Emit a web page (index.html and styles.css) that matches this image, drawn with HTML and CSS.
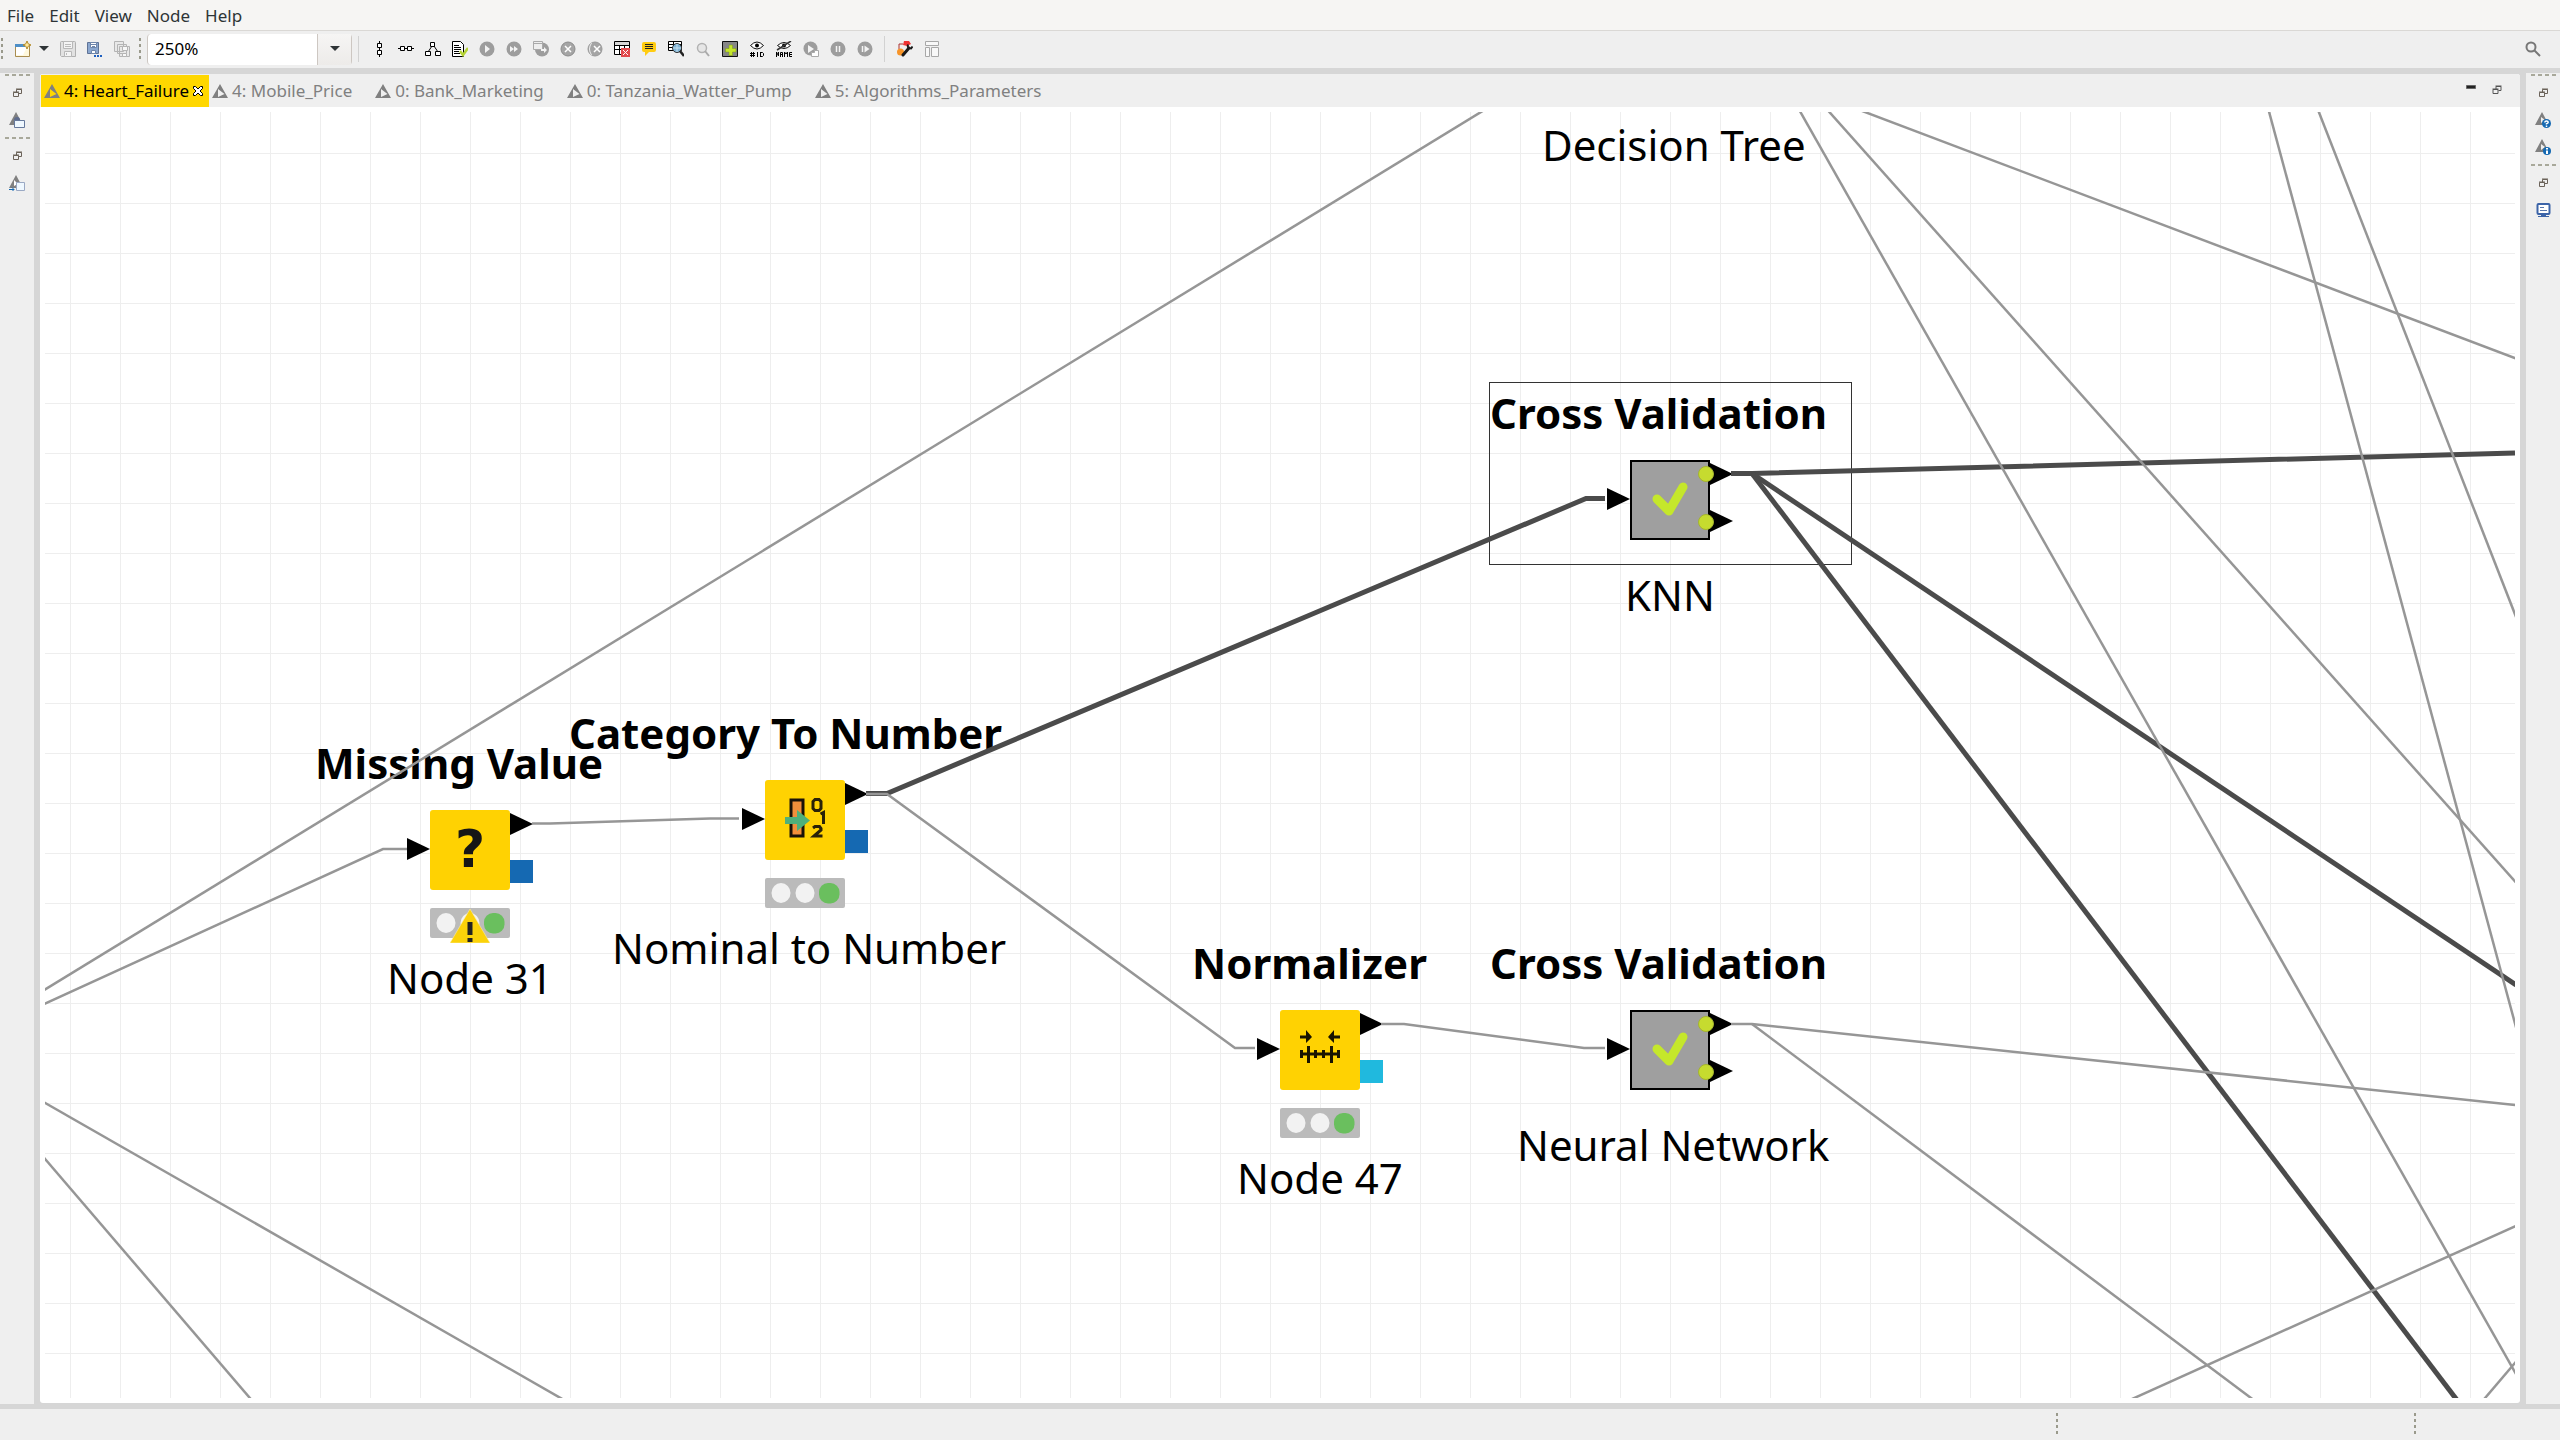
FILE: index.html
```html
<!DOCTYPE html>
<html lang="en">
<head>
<meta charset="utf-8">
<title>Workflow editor</title>
<link rel="stylesheet" href="styles.css">
</head>
<body>
<svg class="defs" aria-hidden="true">
  <symbol id="flow" viewBox="0 0 16 16"><path fill="#808080" fill-rule="evenodd" d="M8 1l8 14H0zM6 6v8l6.500-3z"/></symbol>
  <symbol id="restore" viewBox="0 0 9 9"><path fill="none" stroke="currentColor" d="M3.500 5V1.500h5v4H6M3 1h6M.5 4.500h5v4h-5zM0 4h6"/></symbol>
  <symbol id="disk" viewBox="0 0 16 16"><path fill="#e2e2e2" stroke="#b0b0b0" d="M.5 1.500q0-1 1-1h13q1 0 1 1v14h-14l-1-1z"/><path fill="#f4f4f4" stroke="#b8b8b8" d="M3.500.5h9v7h-9zM4.500 10.500h7v5h-7z"/><path stroke="#bbb" d="M5 3.500h6M5 5.500h6M6.500 12v2"/></symbol>
  <symbol id="port" viewBox="0 0 22 22" preserveAspectRatio="none"><path d="M0 0l22 11L0 22z"/></symbol>
  <symbol id="lights" viewBox="0 0 80 30"><rect width="80" height="30" rx="2" fill="#bbb"/><ellipse cx="16" cy="15" rx="9.500" ry="10" fill="#f2f2f2"/><ellipse cx="40" cy="15" rx="9.500" ry="10" fill="#f2f2f2"/><rect x="54" y="5" width="20.500" height="20.500" rx="9" fill="#6abf5e"/></symbol>
  <symbol id="cross-validation" viewBox="0 0 80 80"><rect x="1" y="1" width="78" height="78" fill="#9f9f9f" stroke="#000" stroke-width="2"/><path fill="none" stroke="#c5e72b" stroke-width="9" stroke-linecap="round" stroke-linejoin="round" d="M27 39l12 12 14-24"/></symbol>
</svg>

<nav class="menubar" aria-label="Main menu">
  <button>File</button><button>Edit</button><button>View</button><button>Node</button><button>Help</button>
</nav>

<div class="toolbar" role="toolbar" aria-label="Tools">
  <span class="grip"></span>
  <button class="tool" aria-label="New"><svg viewBox="0 0 16 16"><path fill="#fff8dc" stroke="#a98d50" d="M.5 3.500h14v12H.5z"/><path fill="#4e8fc7" d="M0 3h10v3H0z"/><path fill="#fff" d="M1 6h11l-4 8H1z"/><path fill="#ffe9a0" stroke="#b38a28" d="M12 0l1.200 2.800L16 4l-2.800 1.200L12 8l-1.200-2.800L8 4l2.800-1.200z"/></svg></button>
  <button class="tool drop" aria-label="New menu"><svg viewBox="0 0 10 6"><path fill="#2e3436" d="M0 0h10L5 5z"/></svg></button>
  <button class="tool" aria-label="Save"><svg><use href="#disk"/></svg></button>
  <button class="tool" aria-label="Save as"><svg viewBox="0 0 16 16"><path fill="#8ba7cf" stroke="#5f7396" d="M.5 1.500h11v11H.5z"/><path fill="#fff" stroke="#6f86ab" d="M3.500 1.500h6v5h-6zM4.500 9.500h4v3h-4z"/><path stroke="#6f86ab" d="M4 3.500h5M5 5.500h3"/><path fill="#1d5fc0" d="M7 14h2v2H7zM10 14h2v2h-2zM13 14h2v2h-2z"/></svg></button>
  <button class="tool" aria-label="Save all"><svg viewBox="0 0 16 16"><path fill="#e8e8e8" stroke="#b4b4b4" d="M.5.500h9v10h-9zM3.500 3.500h9v9h-9zM5.500 5.500h10v10h-10z"/><path fill="#f8f8f8" stroke="#b4b4b4" d="M8.500 5.500h5v4h-5zM8.500 12.500h4v3h-4z"/></svg></button>
  <span class="grip"></span>
  <div class="combo">
    <input type="text" value="250%" aria-label="Zoom level">
    <button aria-label="Zoom levels"><svg viewBox="0 0 10 6"><path fill="#2e3436" d="M0 0h10L5 5z"/></svg></button>
  </div>
  <span class="rule"></span>
  <button class="tool" aria-label="Align vertically"><svg viewBox="0 0 16 16"><path fill="#fff" stroke="#000" d="M8.500 0v2.500M8.500 6.500v3M8.500 13.500V16M6.500 2.500h4v4h-4zM6.500 9.500h4v4h-4z"/></svg></button>
  <button class="tool" aria-label="Align horizontally"><svg viewBox="0 0 16 16"><path fill="#fff" stroke="#000" d="M0 7.500h2.500M6.500 7.500h3M13.500 7.500H16M2.500 5.500h4v4h-4zM9.500 5.500h4v4h-4z"/></svg></button>
  <button class="tool" aria-label="Auto layout"><svg viewBox="0 0 16 16"><path fill="#fff" stroke="#000" d="M7 5L3 11M9 5l4 6M5.500 1.500h4v4h-4zM.5 10.500h5v4h-5zM10.500 10.500h5v4h-5z"/></svg></button>
  <button class="tool" aria-label="Configure"><svg viewBox="0 0 16 16"><path fill="#fff" stroke="#000" d="M.5.500h8l3 3v12H.5z"/><path stroke="#000" d="M2 4.500h5M2 6.500h7M2 8.500h7M2 10.500h5M2 12.500h6"/><path fill="none" stroke="#b5d334" stroke-width="2.500" d="M8 10l3 4 5-7"/></svg></button>
  <button class="tool" aria-label="Execute"><svg viewBox="0 0 16 16"><circle cx="8" cy="8" r="7.500" fill="#9d9d9d"/><path fill="#f3f3f3" d="M6 4v8l5-4z"/></svg></button>
  <button class="tool" aria-label="Execute all"><svg viewBox="0 0 16 16"><circle cx="8" cy="8" r="7.500" fill="#9d9d9d"/><path fill="#f3f3f3" d="M4 5v6l4-3zM8 5v6l4-3z"/></svg></button>
  <button class="tool" aria-label="Execute and open view"><svg viewBox="0 0 16 16"><circle cx="9" cy="8.500" r="7" fill="#9d9d9d"/><path fill="#eee" stroke="#aaa" d="M.5.500h9v8h-9z"/><path stroke="#aaa" d="M0 2.500h9"/><path fill="#f3f3f3" d="M8 8h3V6l3 3-3 3v-2H8z"/></svg></button>
  <button class="tool" aria-label="Cancel"><svg viewBox="0 0 16 16"><circle cx="8" cy="8" r="7" fill="#a5a5a5" stroke="#8c8c8c"/><path stroke="#fff" stroke-width="1.500" d="M5 5l6 6M11 5l-6 6"/></svg></button>
  <button class="tool" aria-label="Cancel all"><svg viewBox="0 0 16 16"><circle cx="8" cy="8" r="7" fill="#a5a5a5" stroke="#999"/><path fill="none" stroke="#eee" d="M4.500 2q-4 6 0 12"/><path stroke="#fff" stroke-width="1.500" d="M7 5l6 6M13 5l-6 6"/></svg></button>
  <button class="tool" aria-label="Reset"><svg viewBox="0 0 16 16"><path fill="#fff" stroke="#000" d="M.5.500h15v13H.5zM0 4.500h16M0 8.500h16M5.500 4v10M10.500 4v10"/><path fill="#d8d8d8" d="M1 1h14v3H1z"/><path fill="#e24a4d" d="M7 7h9v9H7z"/><path stroke="#fff" d="M9 9l5 5M14 9l-5 5"/></svg></button>
  <button class="tool" aria-label="Annotation"><svg viewBox="0 0 16 16"><path fill="#fc1" d="M3 1h10q2 0 2 2v6q0 2-2 2H8l-4 4v-4H3q-2 0-2-2V3q0-2 2-2z"/><path stroke="#222" d="M4 3.500h8M4 5.500h8M4 7.500h8"/></svg></button>
  <button class="tool" aria-label="Inspect table"><svg viewBox="0 0 16 16"><path fill="#fff" stroke="#000" d="M.5.500h13v9H.5zM0 3.500h14M0 6.500h12M5.500 1v9"/><circle cx="9" cy="7" r="4.500" fill="#7fb3d5" stroke="#333"/><path stroke="#c8e2f0" d="M9 3v8M5 7h8"/><path stroke="#222" stroke-width="2.500" d="M12 10l4 5"/></svg></button>
  <button class="tool" aria-label="Find"><svg viewBox="0 0 16 16"><circle cx="7" cy="7" r="4.500" fill="#e6e6e6" stroke="#b2b2b2" stroke-width="1.500"/><path stroke="#aaa" stroke-width="2" d="M10 10l4 5"/></svg></button>
  <button class="tool" aria-label="Add metanode"><svg viewBox="0 0 16 16"><path fill="#868686" stroke="#111" d="M.5.500h15v15H.5z"/><path fill="#c5e72b" stroke="#7d9a12" stroke-width=".5" d="M7 4h3.500v3.500H14V11h-3.500v3.500H7V11H3.500V7.500H7z"/></svg></button>
  <button class="tool" aria-label="Show node IDs"><svg viewBox="0 0 16 16"><path fill="#fff" stroke="#111" d="M1.500 4.500q6.500-7 13 0-6.500 7-13 0z"/><circle cx="8" cy="4.500" r="2"/><path fill="none" stroke="#000" d="M1 12.500h5M1 14.500h5M2.500 11v5M4.500 11v5M8.500 11v5M11.500 11v5M11 11.500h2.500l1 1v2l-1 1H11"/></svg></button>
  <button class="tool" aria-label="Hide node names"><svg viewBox="0 0 16 16"><path fill="#fff" stroke="#111" d="M1.500 4.500q6.500-6 13 0-6.500 6-13 0z"/><circle cx="8" cy="4.500" r="2"/><path stroke="#333" stroke-width="1.500" d="M1 9L15 0"/><path fill="none" stroke="#000" d="M.5 16v-5l2 4v-4M4.500 16v-4.500h2V16M4 13.500h3M8.500 16v-5l1.500 2 1.500-2v5M16 11.500h-2.500v4H16M13 13.500h3"/></svg></button>
  <button class="tool" aria-label="Step"><svg viewBox="0 0 16 16"><circle cx="7.500" cy="7.500" r="7" fill="#9d9d9d"/><path fill="#f3f3f3" d="M5 4v8l6-4z"/><path fill="#fff" stroke="#aaa" d="M8.500 15.500v-4h3v-2h4v6z"/></svg></button>
  <button class="tool" aria-label="Pause"><svg viewBox="0 0 16 16"><circle cx="8" cy="8" r="7.500" fill="#9d9d9d"/><path stroke="#f3f3f3" stroke-width="1.500" d="M6.500 5v6M9.500 5v6"/></svg></button>
  <button class="tool" aria-label="Resume"><svg viewBox="0 0 16 16"><circle cx="8" cy="8" r="7.500" fill="#9d9d9d"/><path stroke="#f3f3f3" stroke-width="1.500" d="M5.500 5v6"/><path fill="#f3f3f3" d="M7.500 4.500v7l5-3.500z"/></svg></button>
  <span class="rule"></span>
  <button class="tool" aria-label="Tools"><svg viewBox="0 0 16 16"><path fill="#e33" d="M7 0h5l2 3-4 2-4-1z"/><path fill="none" stroke="#a33" d="M2 8V3h4"/><circle cx="3.500" cy="11" r="3.500" fill="#f79428"/><path stroke="#1a1a1a" stroke-width="3" stroke-linecap="round" d="M6 14l6-7"/><path fill="none" stroke="#1a1a1a" stroke-width="2" d="M11 3.500q-1 4 3 4l1.500-2"/></svg></button>
  <button class="tool" aria-label="Layout"><svg viewBox="0 0 16 16"><path fill="#f8f8f8" stroke="#a8a8a8" d="M1.500.500h13v4h-13zM1.500 6.500h4v9h-4zM7.500 6.500h7v9h-7z"/></svg></button>
  <button class="tool search" aria-label="Search"><svg viewBox="0 0 16 16"><circle cx="6" cy="6" r="4.500" fill="none" stroke="#777" stroke-width="2"/><path stroke="#777" stroke-width="2" d="M9 9l6 6"/></svg></button>
</div>

<main class="workbench">
  <aside class="trim">
    <span class="dashes"></span>
    <button aria-label="Restore"><svg class="small"><use href="#restore"/></svg></button>
    <button aria-label="Explorer"><svg viewBox="0 0 16 16"><path fill="#808080" d="M7 0l7 13H0z"/><circle cx="8" cy="8" r="3" fill="#5e6c8e"/><path fill="#eff8ff" stroke="#66799c" d="M5.500 8.500h10v7h-10z"/></svg></button>
    <span class="dashes"></span>
    <button aria-label="Restore"><svg class="small"><use href="#restore"/></svg></button>
    <button aria-label="Repository"><svg viewBox="0 0 16 16"><path fill="#808080" d="M7 0l7 13H0z"/><path fill="#fff" d="M5 5v6l4-2z"/><path fill="#eff8ff" stroke="#9aa9c4" d="M7.500 7.500h8v8h-8z"/><path fill="none" stroke="#1569b2" d="M0 14.500h5M3 12.500l2 2-2 2"/></svg></button>
  </aside>

  <section class="editor">
    <header class="tabs">
      <div role="tablist" class="tablist">
        <button role="tab" aria-selected="true" class="tab active"><svg><use href="#flow"/></svg><span>4: Heart_Failure</span><svg class="close" viewBox="0 0 10 10"><path fill="#fff" stroke="#000" d="M.5.500h2L5 3 7.500.500h2v2L7 5l2.500 2.500v2h-2L5 7 2.500 9.500h-2v-2L3 5 .5 2.500z"/></svg></button>
        <button role="tab" class="tab"><svg><use href="#flow"/></svg><span>4: Mobile_Price</span></button>
        <button role="tab" class="tab"><svg><use href="#flow"/></svg><span>0: Bank_Marketing</span></button>
        <button role="tab" class="tab"><svg><use href="#flow"/></svg><span>0: Tanzania_Watter_Pump</span></button>
        <button role="tab" class="tab"><svg><use href="#flow"/></svg><span>5: Algorithms_Parameters</span></button>
      </div>
      <div class="window-tools">
        <button aria-label="Minimize"><svg viewBox="0 0 10 9"><path fill="#222" stroke="#666" d="M.5.500h9v3h-9z"/></svg></button>
        <button aria-label="Restore"><svg class="small"><use href="#restore"/></svg></button>
      </div>
    </header>

    <div class="canvas">
      <div class="selection"></div>

      <span class="label name decision">Decision Tree</span>

      <span class="label title t-knn">Cross Validation</span>
      <div class="node n-knn">
        <svg class="face"><use href="#cross-validation"/></svg>
        <svg class="in"><use href="#port"/></svg><svg class="out"><use href="#port"/></svg><svg class="out second"><use href="#port"/></svg>
        <i class="dot"></i><i class="dot second"></i>
      </div>
      <span class="label name l-knn">KNN</span>

      <span class="label title t-missing">Missing Value</span>
      <div class="node n-missing">
        <div class="face yellow"><b>?</b></div>
        <svg class="in"><use href="#port"/></svg><svg class="out"><use href="#port"/></svg><i class="model"></i>
        <svg class="lights"><use href="#lights"/></svg>
        <svg class="warning" viewBox="0 0 40 34"><path fill="#fbd20a" stroke="#fff3b0" stroke-width=".5" d="M20 0l20 34H0z"/><path stroke="#222" stroke-width="5" d="M20 13v13M20 29v4"/></svg>
      </div>
      <span class="label name l-missing">Node 31</span>

      <span class="label title t-category">Category To Number</span>
      <div class="node n-category">
        <svg class="face yellow" viewBox="0 0 80 80"><path fill="#f28f3b" stroke="#1a1208" stroke-width="3" d="M26 20h12v36H26z"/><path fill="#4fb07a" d="M20 37h12V30l13 10.500L32 51v-7H20z"/><path fill="none" stroke="#2a2208" stroke-width="3" d="M50 19.500h4l2 2v7l-2 2h-4l-2-2v-7zM55.500 34l3-1.500v11.500M48 48l2-1.500h4.500l1.500 2v1.500L49 56h8.500"/></svg>
        <svg class="in"><use href="#port"/></svg><svg class="out"><use href="#port"/></svg><i class="model"></i>
        <svg class="lights"><use href="#lights"/></svg>
      </div>
      <span class="label name l-category">Nominal to Number</span>

      <span class="label title t-normalizer">Normalizer</span>
      <div class="node n-normalizer">
        <svg class="face yellow" viewBox="0 0 80 80"><path fill="none" stroke="#1a1400" stroke-width="3" d="M20 27h7M60 27h-7M20 44h40M21.500 40v8M28.500 36v17M35.500 40v8M43.500 40v8M51.500 36v17M58.500 40v8"/><path fill="#1a1400" d="M26 20l6 7-6 6zM54 20l-6 7 6 6z"/></svg>
        <svg class="in"><use href="#port"/></svg><svg class="out"><use href="#port"/></svg><i class="model cyan"></i>
        <svg class="lights"><use href="#lights"/></svg>
      </div>
      <span class="label name l-normalizer">Node 47</span>

      <span class="label title t-neural">Cross Validation</span>
      <div class="node n-neural">
        <svg class="face"><use href="#cross-validation"/></svg>
        <svg class="in"><use href="#port"/></svg><svg class="out"><use href="#port"/></svg><svg class="out second"><use href="#port"/></svg>
        <i class="dot"></i><i class="dot second"></i>
      </div>
      <span class="label name l-neural">Neural Network</span>

      <svg class="wires" aria-hidden="true">
        <g transform="translate(-45 -112)" fill="none">
          <g stroke="#4b4b4b" stroke-width="5">
            <path d="M866 793.500h21L1586 498.500h19"/>
            <path d="M1731 473.500h21L2515 453"/>
            <path d="M1752 473.500L2516 985"/>
            <path d="M1752 473.500L2460 1404"/>
          </g>
          <g stroke="#969696" stroke-width="2.500">
            <path d="M40 992.500L1490 106.500"/>
            <path d="M40 1006L383 849h24"/>
            <path d="M532 823.500h18L710 818.500h29"/>
            <path d="M866 794h21L1235 1048h20"/>
            <path d="M1381 1024h23L1584 1048h21"/>
            <path d="M1731 1024h21L2520 1105.500"/>
            <path d="M1752 1024L2259 1404"/>
            <path d="M1797 106L2520 1381"/>
            <path d="M1824 106L2520 887"/>
            <path d="M1849 106L2520 360"/>
            <path d="M2267.500 106L2520 1042"/>
            <path d="M2316.500 106L2520 627"/>
            <path d="M40 1100L571 1404"/>
            <path d="M40 1153L255 1404"/>
            <path d="M2121 1404L2520 1224"/>
            <path d="M2480 1404L2520 1357"/>
          </g>
        </g>
      </svg>
    </div>
  </section>

  <aside class="trim">
    <span class="dashes"></span>
    <button aria-label="Restore"><svg class="small"><use href="#restore"/></svg></button>
    <button aria-label="Help"><svg viewBox="0 0 16 16"><path fill="#808080" fill-rule="evenodd" d="M7 0l7 13H0zM6 5v6l4-3z"/><circle cx="11.500" cy="11.500" r="4.500" fill="#1569b2"/><path fill="none" stroke="#fff" stroke-width="1.500" d="M9.800 10.500q0-1.500 1.700-1.500t1.700 1.200q0 1-1.700 1.500v.8M11.500 13.500V15"/></svg></button>
    <button aria-label="Info"><svg viewBox="0 0 16 16"><path fill="#808080" fill-rule="evenodd" d="M7 0l7 13H0zM6 5v6l4-3z"/><circle cx="12" cy="12" r="4" fill="#1569b2"/><path stroke="#fff" stroke-width="2" d="M12 9v1.500M12 11.500V15"/></svg></button>
    <span class="dashes"></span>
    <button aria-label="Restore"><svg class="small"><use href="#restore"/></svg></button>
    <button aria-label="Console"><svg viewBox="0 0 16 16"><rect x="2.500" y="2" width="12" height="10" rx="1" fill="#fff" stroke="#3c64a8" stroke-width="2"/><path stroke="#5877ad" d="M5 5.500h4M5 8.500h7"/><path fill="#3c64a8" d="M6 13h5v1H6zM3 14h11v1H3z"/></svg></button>
  </aside>
</main>

<footer class="statusbar"><span class="grip"></span><span class="grip"></span></footer>
</body>
</html>
```
FILE: styles.css
```css
* { box-sizing: border-box; }
body {
  margin: 0;
  min-height: 100vh;
  display: flex;
  flex-direction: column;
  background: #efefef;
  font: 17px/24px "Noto Sans", sans-serif;
  color: #2e3436;
  overflow: hidden;
}
button {
  margin: 0;
  padding: 0;
  border: 0;
  background: none;
  font: inherit;
  color: inherit;
}
svg { display: block; width: 16px; height: 16px; flex: none; }
svg.small { width: 9px; height: 9px; }
.defs { position: absolute; width: 0; height: 0; }

.menubar {
  display: flex;
  gap: 15px;
  height: 31px;
  padding: 2px 7px 0;
  background: #f6f5f3;
  border-bottom: 1px solid #dad8d5;
}

.toolbar { display: flex; align-items: center; height: 37px; padding-bottom: 1px; }
.grip {
  width: 2px;
  height: 23px;
  background: repeating-linear-gradient(#9a9a8c 0 3px, transparent 3px 6px);
}
.toolbar .grip { margin: 0 6px 0 1px; }
.toolbar .drop + .tool { margin-left: 3px; }
.toolbar .tool + .grip { margin: 0 6px 0 4px; }
.tool {
  width: 27px;
  height: 26px;
  display: flex;
  align-items: center;
  justify-content: center;
}
.drop { width: 15px; }
.drop svg, .combo svg { width: 10px; height: 6px; }
.combo {
  display: flex;
  width: 205px;
  height: 31px;
  background: #fff;
  border: 1px solid #cdc7c2;
  border-width: 0 1px;
  border-radius: 4px;
}
.combo input {
  flex: 1;
  min-width: 0;
  padding: 0 7px;
  border: 0;
  outline: 0;
  background: none;
  font: inherit;
  color: #000;
}
.combo button {
  width: 34px;
  display: grid;
  place-items: center;
  border-left: 1px solid #cdc7c2;
  background: linear-gradient(#f6f5f4, #edebe9);
}
.rule { width: 1px; height: 26px; margin: 0 6px; background: #d2d2d2; }
.search { margin-left: auto; margin-right: 14px; }

.workbench {
  flex: 1;
  display: flex;
  gap: 6px;
  padding: 5px 0;
  background: #d6d6d6;
}
.trim {
  width: 34px;
  display: flex;
  flex-direction: column;
  align-items: center;
  background: #efefef;
  color: #6b6259;
}
.trim button { width: 34px; height: 27px; display: grid; place-items: center; }
.dashes {
  width: 25px;
  height: 2px;
  margin: 1px 0 3px;
  background: repeating-linear-gradient(90deg, #a8a89a 0 4px, transparent 4px 7px);
}
.trim button + .dashes { margin-top: 4px; }

.editor {
  flex: 1;
  display: flex;
  flex-direction: column;
  margin: 1px 0;
  background: #fff;
  border-radius: 3px;
  overflow: hidden;
}
.tabs {
  display: flex;
  justify-content: space-between;
  height: 33px;
  padding: 1px 1px 0;
  background: #efefef;
}
.tablist { display: flex; }
.tab {
  display: flex;
  align-items: center;
  gap: 4px;
  padding: 0 20px 0 3px;
  color: #808080;
}
.active { padding-right: 6px; background: #ffd700; color: #000; }
.close { width: 10px; height: 10px; }
.window-tools { display: flex; gap: 16px; padding: 10px 17px 0 0; color: #555; }
.window-tools button { height: 9px; }
.window-tools svg { height: 9px; width: 10px; }

.canvas {
  position: relative;
  flex: 1;
  margin: 5px;
  overflow: hidden;
  background:
    linear-gradient(90deg, #eee 1px, transparent 1px) 25px 0 / 50px 50px,
    linear-gradient(#eee 1px, transparent 1px) 0 41px / 50px 50px,
    #fff;
}
.wires { position: absolute; inset: 0; width: 100%; height: 100%; pointer-events: none; }
.selection {
  position: absolute;
  left: 1444px;
  top: 270px;
  width: 363px;
  height: 183px;
  border: 1px solid #333;
}

.label {
  position: absolute;
  font-size: 42px;
  line-height: 56px;
  white-space: nowrap;
  color: #000;
}
.title { font-weight: 700; }
.decision { left: 1497px; top: 5px; }
.t-knn { left: 1445px; top: 273px; }
.l-knn { left: 1580px; top: 455px; }
.t-missing { left: 270px; top: 623px; }
.l-missing { left: 342px; top: 838px; }
.t-category { left: 524px; top: 593px; }
.l-category { left: 567px; top: 808px; }
.t-normalizer { left: 1147px; top: 823px; }
.l-normalizer { left: 1192px; top: 1038px; }
.t-neural { left: 1445px; top: 823px; }
.l-neural { left: 1472px; top: 1005px; }

.node { position: absolute; width: 80px; height: 80px; }
.n-knn { left: 1585px; top: 348px; }
.n-missing { left: 385px; top: 698px; }
.n-category { left: 720px; top: 668px; }
.n-normalizer { left: 1235px; top: 898px; }
.n-neural { left: 1585px; top: 898px; }

.face { width: 80px; height: 80px; }
.yellow { background: #ffd202; border-radius: 3px; }
.face b {
  display: block;
  font: 700 52px/78px "DejaVu Sans", sans-serif;
  text-align: center;
  color: #161616;
}
.in, .out, .model, .dot, .lights, .warning { position: absolute; }
.in, .out { width: 23px; height: 22px; }
.in { left: -23px; top: 28px; }
.out { left: 80px; top: 3px; }
.out.second { top: 50px; }
.model { left: 80px; top: 50px; width: 23px; height: 23px; background: #1569b2; }
.cyan { background: #20b9de; }
.dot {
  left: 68px;
  top: 6px;
  width: 16px;
  height: 16px;
  border: 1px solid #a5b52d;
  border-radius: 50%;
  background: #c6db2f;
}
.dot.second { top: 54px; }
.lights { left: 0; top: 98px; width: 80px; height: 30px; }
.warning { left: 20px; top: 99px; width: 40px; height: 34px; }

.statusbar {
  display: flex;
  align-items: center;
  justify-content: flex-end;
  gap: 356px;
  height: 31px;
  padding-right: 144px;
}
```
